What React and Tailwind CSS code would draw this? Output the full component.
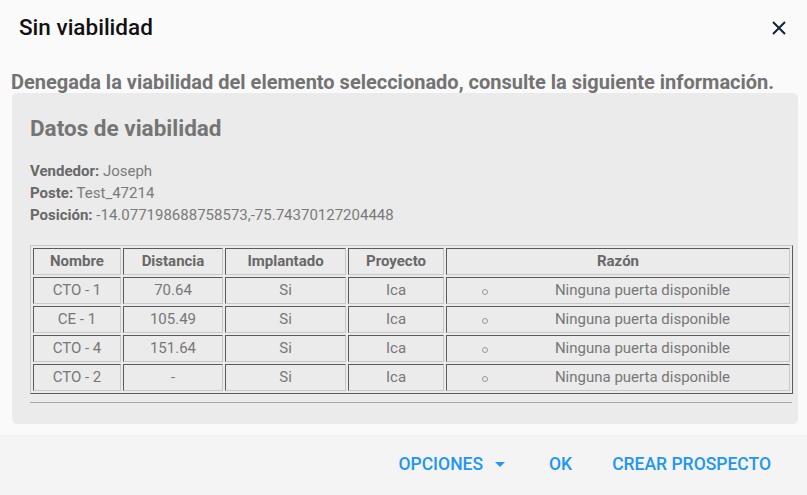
import React from 'react';

const rows = [
    { nombre: 'CTO - 1', distancia: '70.64', implantado: 'Si', proyecto: 'Ica' },
    { nombre: 'CE - 1', distancia: '105.49', implantado: 'Si', proyecto: 'Ica' },
    { nombre: 'CTO - 4', distancia: '151.64', implantado: 'Si', proyecto: 'Ica' },
    { nombre: 'CTO - 2', distancia: '-', implantado: 'Si', proyecto: 'Ica' },
];

const cell = 'h-[27px] p-0 text-center border border-t-[#5a5a5a] border-l-[#5a5a5a] border-b-[#c8c8c8] border-r-[#c8c8c8]';

const App = () => {
    return (
        <div className="w-[807px] h-[495px] bg-[#fafafa] flex flex-col font-['Roboto',sans-serif] overflow-hidden">
            <div className="h-[56px] flex items-center justify-between pl-[19px] pr-[21px]">
                <h2 className="text-[22.5px] font-medium text-[#111]">Sin viabilidad</h2>
                <svg width="14" height="14" viewBox="0 0 14 14" className="text-[#0f2236]">
                    <path d="M1 1 L13 13 M13 1 L1 13" stroke="currentColor" strokeWidth="2" />
                </svg>
            </div>

            <p className="mt-[15px] pl-[11px] text-[20px] leading-[22px] font-bold text-[#737373]">
                Denegada la viabilidad del elemento seleccionado, consulte la siguiente información.
            </p>

            <div className="ml-[12px] mr-[9px] bg-[#ebebeb] rounded-[5px] pl-[18px] pr-[5px] pt-[21px] pb-[21px]">
                <h3 className="text-[22.5px] leading-[28px] font-bold text-[#757575]">Datos de viabilidad</h3>
                <div className="mt-[18px] text-[15px] leading-[22px] text-[#7a7a7a]">
                    <p><b className="text-[#686868]">Vendedor:</b> Joseph</p>
                    <p><b className="text-[#686868]">Poste:</b> Test_47214</p>
                    <p><b className="text-[#686868]">Posición:</b> -14.077198688758573,-75.74370127204448</p>
                </div>

                <table className="mt-[19px] w-[763px] table-fixed border-separate border-spacing-[2px] border border-t-[#c8c8c8] border-l-[#c8c8c8] border-b-[#5a5a5a] border-r-[#5a5a5a] text-[15px] text-[#777]">
                    <thead>
                        <tr className="font-bold text-[#686868]">
                            <th className={`${cell} w-[88px]`}>Nombre</th>
                            <th className={`${cell} w-[100px]`}>Distancia</th>
                            <th className={`${cell} w-[121px]`}>Implantado</th>
                            <th className={`${cell} w-[96px]`}>Proyecto</th>
                            <th className={`${cell} w-[344px]`}>Razón</th>
                        </tr>
                    </thead>
                    <tbody>
                        {rows.map(r => (
                            <tr key={r.nombre}>
                                <td className={cell}>{r.nombre}</td>
                                <td className={cell}>{r.distancia}</td>
                                <td className={cell}>{r.implantado}</td>
                                <td className={cell}>{r.proyecto}</td>
                                <td className={cell}>
                                    <div className="flex items-center">
                                        <span className="ml-[35px] mt-[3px] w-[6px] h-[6px] rounded-full border border-[#999]"></span>
                                        <span className="flex-1 pl-[8px] text-center">Ninguna puerta disponible</span>
                                    </div>
                                </td>
                            </tr>
                        ))}
                    </tbody>
                </table>

                <div className="mt-[8px] w-[762px] border-t border-[#a8a8a8]"></div>
            </div>

            <div className="mt-[11px] flex-1 bg-[#f4f4f4] flex items-center justify-end pr-[36px] pb-[2px] text-[17.5px] font-medium text-[#2196f3]">
                <button className="flex items-center">
                    OPCIONES
                    <svg width="10" height="5" viewBox="0 0 10 5" className="ml-[12px]">
                        <path d="M0 0 L10 0 L5 5 Z" fill="currentColor" />
                    </svg>
                </button>
                <button className="ml-[44px]">OK</button>
                <button className="ml-[40px]">CREAR PROSPECTO</button>
            </div>
        </div>
    );
};

export default App;
